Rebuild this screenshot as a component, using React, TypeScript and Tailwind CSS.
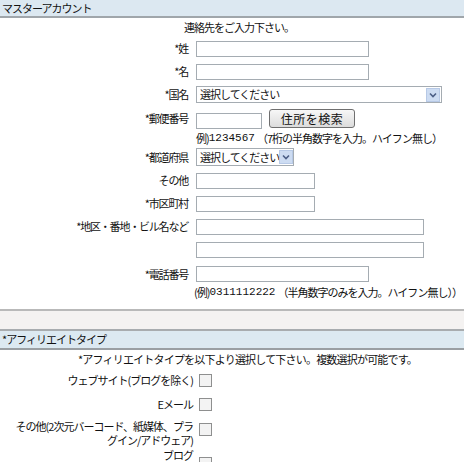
import React from "react";

function Input({ w, className = "" }: { w: string; className?: string }) {
	return <div className={`h-[16px] border border-[#a5acb2] bg-white ${w} ${className}`} />;
}

function Select({ w, h }: { w: string; h: string }) {
	return (
		<div className={`flex items-center overflow-hidden whitespace-nowrap border border-[#a5acb2] bg-white pl-[3px] ${w} ${h}`}>
			<span>選択してください</span>
			<span className="ml-auto mr-[1px] flex h-[14px] w-[14px] shrink-0 items-center justify-center border border-[#b7c9e6] bg-[#cddcf2]">
				<svg width="8" height="6" viewBox="0 0 8 6">
					<path d="M1 1.5 L4 4.5 L7 1.5" fill="none" stroke="#4c5f86" strokeWidth="1.6" />
				</svg>
			</span>
		</div>
	);
}

function Row({ label, h, children }: { label: string; h: string; children: React.ReactNode }) {
	return (
		<div className={`flex items-center gap-[6px] ${h}`}>
			<div className="w-[190px] pr-[2px] text-right tracking-[-1.2px]">{label}</div>
			{children}
		</div>
	);
}

function Check({ className = "" }: { className?: string }) {
	return <div className={`h-[13px] w-[13px] shrink-0 border border-[#8e8f8f] bg-[#f3f3f3] ${className}`} />;
}

const mono = "font-['Liberation_Mono',monospace] tracking-normal";

export default function App() {
	return (
		<div className="h-[462px] w-[464px] overflow-hidden whitespace-nowrap bg-white font-['Noto_Sans_CJK_JP','Noto_Sans',sans-serif] text-[11px] leading-none tracking-[-1px] text-[#111]">
			<div className="flex h-[18px] items-center border-b-2 border-[#a0a6ab] bg-[#dce8f1] pl-[2px]">マスターアカウント</div>
			<div className="flex h-[19px] items-center pl-[184px]">連絡先をご入力下さい。</div>

			<Row label="*姓" h="h-[23px]">
				<Input w="w-[173px]" />
			</Row>
			<Row label="*名" h="h-[23px]">
				<Input w="w-[173px]" />
			</Row>
			<Row label="*国名" h="h-[23px]">
				<Select w="w-[246px]" h="h-[17px]" />
			</Row>
			<Row label="*郵便番号" h="h-[25px]">
				<Input w="w-[66px]" className="mb-[2px] self-end" />
				<button className="ml-[1px] h-[19px] w-[86px] rounded-[3px] border border-[#6f6f6f] bg-gradient-to-b from-[#f7f7f7] to-[#dcdcdc] text-[12px] tracking-[0.5px]">
					住所を検索
				</button>
			</Row>
			<div className="flex h-[14px] items-center pl-[196px]">
				例)<span className={mono}>1234567</span>
				<span className="ml-[2px]">（7桁の半角数字を入力。ハイフン無し）</span>
			</div>
			<Row label="*都道府県" h="h-[24px]">
				<Select w="w-[98px]" h="h-[18px]" />
			</Row>
			<Row label="その他" h="h-[23px]">
				<Input w="w-[119px]" />
			</Row>
			<Row label="*市区町村" h="h-[23px]">
				<Input w="w-[119px]" />
			</Row>
			<Row label="*地区・番地・ビル名など" h="h-[23px]">
				<Input w="w-[228px]" />
			</Row>
			<Row label="" h="h-[24px]">
				<Input w="w-[228px]" />
			</Row>
			<Row label="*電話番号" h="h-[24px]">
				<Input w="w-[173px]" />
			</Row>
			<div className="flex h-[13px] items-center pl-[194px]">
				(例)<span className={mono}>0311112222</span>
				<span className="ml-[2px]">（半角数字のみを入力。ハイフン無し））</span>
			</div>
			<div className="h-[10px]" />

			<div className="h-[20px] border-t-2 border-[#b9b9b9] bg-[#f4f2f1]" />
			<div className="flex h-[21px] items-center border-y-2 border-t-[#a8acaf] border-b-[#9a9fa3] bg-[#dce9f1] pl-[2px]">
				*アフィリエイトタイプ
			</div>
			<div className="flex h-[18px] items-center pl-[78px] tracking-[-0.8px]">
				*アフィリエイトタイプを以下より選択して下さい。複数選択が可能です。
			</div>

			<div className="flex h-[25px] items-center gap-[6px]">
				<div className="w-[193px] text-right">ウェブサイト(ブログを除く)</div>
				<Check />
			</div>
			<div className="flex h-[22px] items-center gap-[6px]">
				<div className="w-[193px] text-right">Eメール</div>
				<Check />
			</div>
			<div className="flex h-[32px] items-start gap-[6px]">
				<div className="flex w-[193px] flex-col items-end pt-[4px] leading-[14px]">
					<span>その他(2次元バーコード、紙媒体、プラ</span>
					<span>グイン/アドウェア)</span>
				</div>
				<Check className="mt-[8px]" />
			</div>
			<div className="flex h-[20px] items-start gap-[6px]">
				<div className="w-[193px] pt-[2px] text-right leading-[12px]">ブログ</div>
				<Check className="mt-[10px]" />
			</div>
		</div>
	);
}
